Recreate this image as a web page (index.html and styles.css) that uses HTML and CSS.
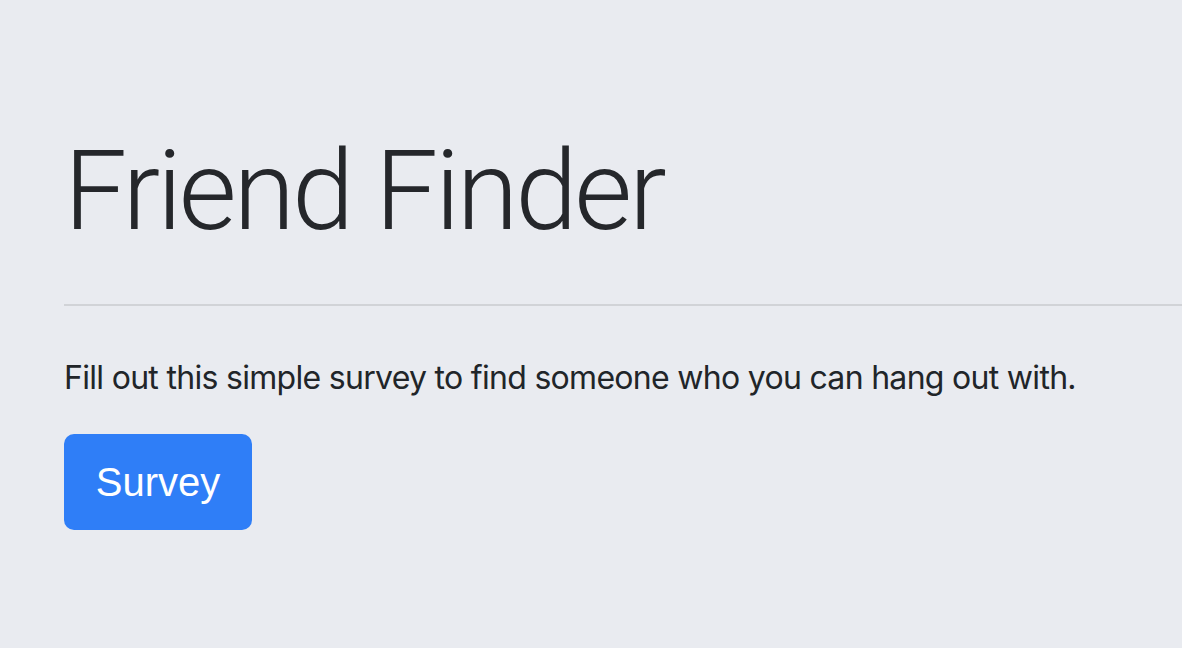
FILE: index.html
```html
<!DOCTYPE html>
<html lang="en">
<head>
<meta charset="utf-8">
<title>Friend Finder</title>
<link rel="stylesheet" href="styles.css">
</head>
<body>
<div class="jumbotron">
  <h1 class="title">Friend Finder</h1>
  <hr class="divider">
  <p class="intro">Fill out this simple survey to find someone who you can hang out with.</p>
  <a class="btn-survey" href="#">Survey</a>
</div>
</body>
</html>
```
FILE: styles.css
```css
html, body {
  margin: 0;
  padding: 0;
  background: #e9ebf0;
}
body {
  font-family: Inter, "Noto Sans", sans-serif;
  color: #212529;
  height: 648px;
  overflow: hidden;
}
.jumbotron {
  background: #e9ebf0;
  padding: 124px 0 128px 64px;
  display: flex;
  flex-direction: column;
  align-items: flex-start;
}
.title {
  margin: 0 0 16px 0;
  font-family: Roboto, Inter, sans-serif;
  font-size: 112px;
  font-weight: 300;
  line-height: 1.2;
  color: #25272b;
  letter-spacing: -3.2px;
}
.divider {
  align-self: stretch;
  margin: 30px 0 48px 0;
  border: 0;
  border-top: 2px solid rgba(0, 0, 0, 0.1);
}
.intro {
  margin: 0 0 32px 0;
  font-size: 32px;
  line-height: 1.5;
  letter-spacing: -0.7px;
  color: #212529;
}
.btn-survey {
  display: inline-block;
  box-sizing: border-box;
  width: 188px;
  height: 96px;
  line-height: 96px;
  text-align: center;
  background: #2f7ef7;
  color: #fff;
  font-family: "Liberation Sans", Arial, sans-serif;
  font-size: 40px;
  text-decoration: none;
  border-radius: 10px;
}
```
